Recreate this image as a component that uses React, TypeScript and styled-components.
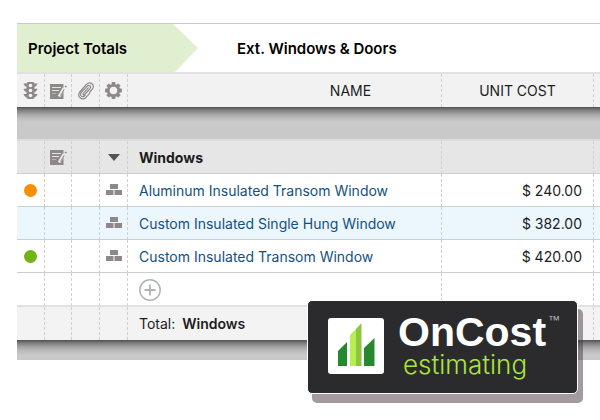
import React from "react";
import styled, { createGlobalStyle, css } from "styled-components";

const GlobalStyle = createGlobalStyle`
  *, *::before, *::after { box-sizing: border-box; }
  body {
    margin: 0;
    background: #fff;
    color: #1c1c1e;
    font-family: Inter, "Liberation Sans", sans-serif;
    font-size: 14px;
    line-height: 20px;
  }
`;

const Page = styled.main`
  position: relative;
  padding: 23px 0 44px 17px;
`;

const Crumbs = styled.nav`
  display: flex;
  align-items: stretch;
  height: 49px;
  border-top: 1px solid #c9c9c9;
`;

const Crumb = styled.a<{ $active?: boolean }>`
  display: flex;
  align-items: center;
  padding-top: 2px;
  padding-left: ${(p) => (p.$active ? 11 : 39)}px;
  color: #000;
  font-size: 15px;
  font-weight: 600;
  text-decoration: none;
  ${(p) =>
    p.$active &&
    css`
      width: 181px;
      background: #e0efcf;
      clip-path: polygon(0 0, 156px 0, 100% 50%, 158px 100%, 0 100%);
    `}
`;

const Table = styled.table`
  width: 100%;
  table-layout: fixed;
  border-collapse: separate;
  border-spacing: 0;
`;

const Col = styled.col<{ $width?: number }>`
  width: ${(p) => (p.$width ? `${p.$width}px` : "auto")};
`;

const rowTones = {
  head: css`
    height: 35px;
    background: #f2f2f2;
    --top: 2px solid #e1e1e1;
    --bottom: 0 solid;
    --drop: 0;
  `,
  group: css`
    height: 35px;
    background: #e6e6e6;
    --top: 2px solid #dcdcdc;
    --bottom: 1px solid #cbcfcf;
    --drop: 2px;
  `,
  plain: css`
    height: 33px;
    background: #fff;
    --top: 0 solid;
    --bottom: 1px solid #cbcfcf;
    --drop: 2px;
  `,
  tinted: css`
    height: 33px;
    background: #ebf6fd;
    --top: 0 solid;
    --bottom: 1px solid #cbcfcf;
    --drop: 2px;
  `,
  add: css`
    height: 32px;
    background: #fff;
    --top: 0 solid;
    --bottom: 0 solid;
    --drop: 2px;
  `,
  total: css`
    height: 35px;
    background: #f3f3f3;
    --top: 2px solid #e1e1e1;
    --bottom: 0 solid;
    --drop: 0;
  `,
};

const Row = styled.tr<{ $tone: keyof typeof rowTones }>`
  ${(p) => rowTones[p.$tone]}
`;

const Cell = styled.td<{ $align?: "left" | "center" | "right"; $bold?: boolean; $last?: boolean }>`
  padding: ${(p) => (p.$align === "center" ? "0 1px 0 0" : "var(--drop) 12px 0 11px")};
  border-top: var(--top);
  border-bottom: var(--bottom);
  text-align: ${(p) => p.$align || "left"};
  vertical-align: middle;
  font-weight: ${(p) => (p.$bold ? 700 : 400)};
  white-space: nowrap;
  ${(p) =>
    p.$last
      ? css`
          padding: 0;
        `
      : css`
          background: repeating-linear-gradient(#cfcfcf 0 3px, transparent 3px 5px) right top / 1px 100% no-repeat;
        `}
  & > svg {
    display: block;
    margin: 0 auto;
  }
`;

const NameHead = styled(Cell)`
  padding-left: 132px;
`;

const Band = styled.td<{ $height: number }>`
  height: ${(p) => p.$height}px;
  padding: 0;
  background: linear-gradient(#505050 0, #7d7d7d 3px, #a3a3a3 7px, #bdbdbd 11px, #c9c9c9 15px);
`;

const ItemLink = styled.a`
  color: #14507f;
  text-decoration: none;
`;

const Dot = styled.span<{ $color: string }>`
  display: block;
  width: 13px;
  height: 13px;
  margin: 0 auto;
  border-radius: 50%;
  background: ${(p) => p.$color};
`;

const IconButton = styled.button`
  display: block;
  margin: 0 auto;
  padding: 0;
  border: 0;
  background: none;
  svg { display: block; }
`;

const AddButton = styled(IconButton)`
  margin: 0;
`;

const TotalName = styled.strong`
  margin-left: 7px;
  font-weight: 600;
`;

const Card = styled.aside`
  position: absolute;
  top: 300px;
  right: 22px;
  display: flex;
  gap: 14px;
  width: 271px;
  height: 94px;
  padding: 17px 0 0 20px;
  border: 1px solid #fff;
  border-radius: 5px;
  background: #2b2b2d;
  box-shadow: 5px 9px 0 rgba(72, 56, 64, 0.5);
  font-family: "Liberation Sans", sans-serif;
`;

const Brand = styled.div`
  display: flex;
  flex-direction: column;
  margin-top: -6px;
`;

const BrandName = styled.div`
  display: flex;
  align-items: flex-start;
  color: #fff;
  font-size: 41px;
  font-weight: 700;
  line-height: 40px;
`;

const Mark = styled.span`
  padding: 2px 0 0 2px;
  color: #bbb;
  font-size: 12px;
  font-weight: 400;
  line-height: 12px;
`;

const BrandSub = styled.div`
  padding-left: 5px;
  color: #a9e63c;
  font-family: Inter, "Liberation Sans", sans-serif;
  font-size: 26px;
  font-weight: 300;
  line-height: 26px;
`;

const Signal = () => (
  <svg width="15" height="17" viewBox="0 0 15 17" aria-label="Status">
    <path
      fill="#8e8988"
      d="M.5 1.500H4v3.500C2 4.500 1 3.500.5 1.500zM.5 6.800H4v3.500C2 9.800 1 8.800.5 6.800zM.5 12H4v3.500C2 15 1 14 .5 12zM14.500 1.500H11v3.500c2-.5 3-1.500 3.500-3.500zM14.500 6.800H11v3.500c2-.5 3-1.500 3.500-3.500zM14.500 12H11v3.500c2-.5 3-1.500 3.500-3.500z"
    />
    <rect x="3.500" y="0" width="8" height="17" rx="2" fill="#8e8988" />
    <g fill="#f2f2f2">
      <circle cx="7.500" cy="3.500" r="1.800" />
      <circle cx="7.500" cy="8.500" r="1.800" />
      <circle cx="7.500" cy="13.500" r="1.800" />
    </g>
  </svg>
);

const Note = () => (
  <svg width="17" height="16" viewBox="0 0 17 16" aria-label="Notes">
    <path fill="#8e8988" d="M0 1h13.500v15H0z" />
    <path stroke="#e4e3e3" strokeWidth="1" d="M2 4.500h9M2 7.500h7" />
    <path stroke="#b5b1b0" strokeWidth="1" d="M2 10.500h4" />
    <path stroke="#eeeeee" strokeWidth="2.600" d="m9 13.500 5-8.500" />
    <path stroke="#8e8988" strokeWidth="1" d="m10.600 12.500 3.600-6.300" />
    <path fill="#8e8988" d="M14.500 3.400 15.600 2.400l1.200.9-.8 1.500z" />
  </svg>
);

const Clip = () => (
  <svg width="17" height="18" viewBox="0 0 17 18" aria-label="Attachments">
    <path
      fill="none"
      stroke="#8e8988"
      strokeWidth="1.200"
      strokeLinecap="round"
      d="M11.200 5.800 6.300 11.300c-.9 1.100.4 2.300 1.500 1.200l5-5.700c2-2.400-.7-4.700-2.800-2.500L4.500 10.200c-2.600 3.200.9 6.100 3.600 3.300M8.100 13.500l.1-.1M12.600 11.700 9.200 15.200c-4.300 4.200-10-.8-6-5.700L9.400 2.400c3.800-3.800 9.100.6 5.700 5L12.600 10.300"
    />
  </svg>
);

const Gear = () => (
  <svg width="17" height="17" viewBox="-8.5 -8.5 17 17" aria-label="Settings">
    <g fill="#8e8988">
      {[0, 45, 90, 135].map((a) => (
        <rect key={a} x="-1.900" y="-8.400" width="3.800" height="16.800" rx=".6" transform={`rotate(${a})`} />
      ))}
      <circle r="6.600" />
    </g>
    <circle r="3.800" fill="#f2f2f2" />
  </svg>
);

const Blocks = () => (
  <svg width="16" height="13" viewBox="0 0 16 13" aria-label="Assembly">
    <path fill="#8e8988" d="M4 0h8v5H4zM0 6h7.500v5H0zM8.500 6H16v5H8.500z" />
  </svg>
);

const Caret = () => (
  <svg width="12" height="7" viewBox="0 0 12 7">
    <path fill="#505356" d="M0 0h12L6 7z" />
  </svg>
);

const Plus = () => (
  <svg width="22" height="22" viewBox="0 0 22 22">
    <circle cx="11" cy="11" r="10.200" fill="none" stroke="#b0b2b4" strokeWidth="1.500" />
    <path d="M11 5.500v11M5.500 11h11" stroke="#b0b2b4" strokeWidth="1.800" />
  </svg>
);

const Logo = () => (
  <svg width="56" height="56" viewBox="0 0 56 56" aria-label="OnCost logo">
    <rect width="56" height="56" rx="3" fill="#fff" />
    <path fill="#27892e" d="M10 33l9-9v24h-9zM36 30l10.500-10v28H36z" />
    <path fill="#b8ee51" d="M22 17l6-6v37h-6z" />
    <path fill="#8dc63f" d="M28 11l5.500-6v43H28z" />
  </svg>
);

type Item = { name: string; cost: string; status?: string; tinted?: boolean };

const items: Item[] = [
  { name: "Aluminum Insulated Transom Window", cost: "$ 240.00", status: "#f98f00" },
  { name: "Custom Insulated Single Hung Window", cost: "$ 382.00", tinted: true },
  { name: "Custom Insulated Transom Window", cost: "$ 420.00", status: "#6fb414" },
];

export default function App() {
  return (
    <>
      <GlobalStyle />
      <Page>
        <Crumbs>
          <Crumb href="#totals" $active>Project Totals</Crumb>
          <Crumb href="#windows">Ext. Windows &amp; Doors</Crumb>
        </Crumbs>
        <Table>
          <colgroup>
            <Col $width={28} />
            <Col $width={27} />
            <Col $width={28} />
            <Col $width={28} />
            <Col />
            <Col $width={152} />
            <Col $width={6} />
          </colgroup>
          <thead>
            <Row $tone="head">
              <Cell as="th" $align="center"><Signal /></Cell>
              <Cell as="th" $align="center"><Note /></Cell>
              <Cell as="th" $align="center"><Clip /></Cell>
              <Cell as="th" $align="center"><Gear /></Cell>
              <NameHead as="th" scope="col" $align="center">NAME</NameHead>
              <Cell as="th" scope="col" $align="center">UNIT COST</Cell>
              <Cell $last />
            </Row>
          </thead>
          <tbody>
            <tr><Band colSpan={7} $height={32} /></tr>
            <Row $tone="group">
              <Cell />
              <Cell $align="center"><Note /></Cell>
              <Cell />
              <Cell $align="center"><IconButton aria-label="Collapse Windows"><Caret /></IconButton></Cell>
              <Cell $bold>Windows</Cell>
              <Cell />
              <Cell $last />
            </Row>
            {items.map((item) => (
              <Row key={item.name} $tone={item.tinted ? "tinted" : "plain"}>
                <Cell $align="center">{item.status && <Dot $color={item.status} />}</Cell>
                <Cell />
                <Cell />
                <Cell $align="center"><Blocks /></Cell>
                <Cell><ItemLink href="#item">{item.name}</ItemLink></Cell>
                <Cell $align="right">{item.cost}</Cell>
                <Cell $last />
              </Row>
            ))}
            <Row $tone="add">
              <Cell />
              <Cell />
              <Cell />
              <Cell />
              <Cell><AddButton aria-label="Add item"><Plus /></AddButton></Cell>
              <Cell />
              <Cell $last />
            </Row>
            <Row $tone="total">
              <Cell />
              <Cell />
              <Cell />
              <Cell />
              <Cell>Total:<TotalName>Windows</TotalName></Cell>
              <Cell />
              <Cell $last />
            </Row>
            <tr><Band colSpan={7} $height={20} /></tr>
          </tbody>
        </Table>
        <Card>
          <Logo />
          <Brand>
            <BrandName>OnCost<Mark>™</Mark></BrandName>
            <BrandSub>estimating</BrandSub>
          </Brand>
        </Card>
      </Page>
    </>
  );
}
